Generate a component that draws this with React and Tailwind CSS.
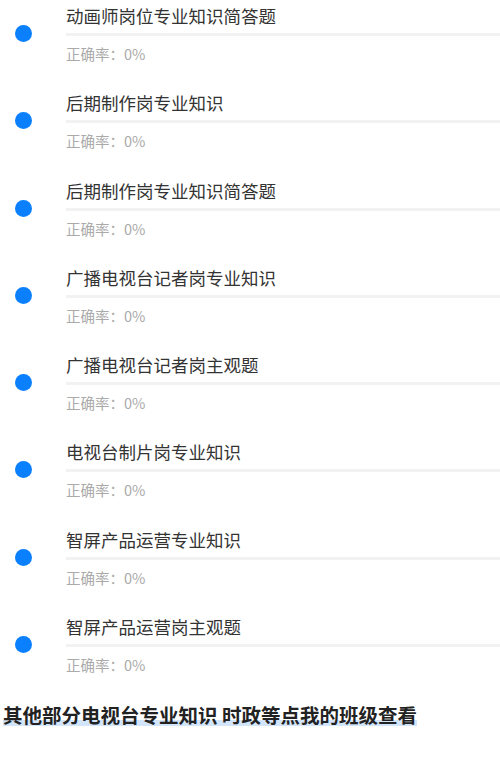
const items = [
  '动画师岗位专业知识简答题',
  '后期制作岗专业知识',
  '后期制作岗专业知识简答题',
  '广播电视台记者岗专业知识',
  '广播电视台记者岗主观题',
  '电视台制片岗专业知识',
  '智屏产品运营专业知识',
  '智屏产品运营岗主观题',
];

export default function App() {
  return (
    <div className="w-[500px] h-[761px] bg-white overflow-hidden" style={{ fontFamily: '"Noto Sans CJK SC", "Noto Sans", sans-serif' }}>
      {items.map((title) => (
        <div key={title} className="flex h-[87.3px]">
          <div className="w-[66px] shrink-0 pt-[25px] pl-[15px]">
            <div className="w-[17px] h-[17px] rounded-full bg-[#0a80fe]" />
          </div>
          <div className="flex-1 pt-[4px]">
            <div className="text-[17.5px] leading-6 text-[#333]">{title}</div>
            <div className="h-[3px] mt-[5px] bg-[#f2f2f2]" />
            <div className="mt-[8px] text-[14.5px] leading-5 text-[#aaa]">正确率：0%</div>
          </div>
        </div>
      ))}
      <div className="mt-[5px] pl-[3px] text-[19.5px] leading-6 font-bold text-[#222]">
        <span className="bg-[linear-gradient(to_bottom,transparent_68%,#d3e5fb_68%,#d3e5fb_88%,transparent_88%)]">
          其他部分电视台专业知识 时政等点我的班级查看
        </span>
      </div>
    </div>
  );
}
